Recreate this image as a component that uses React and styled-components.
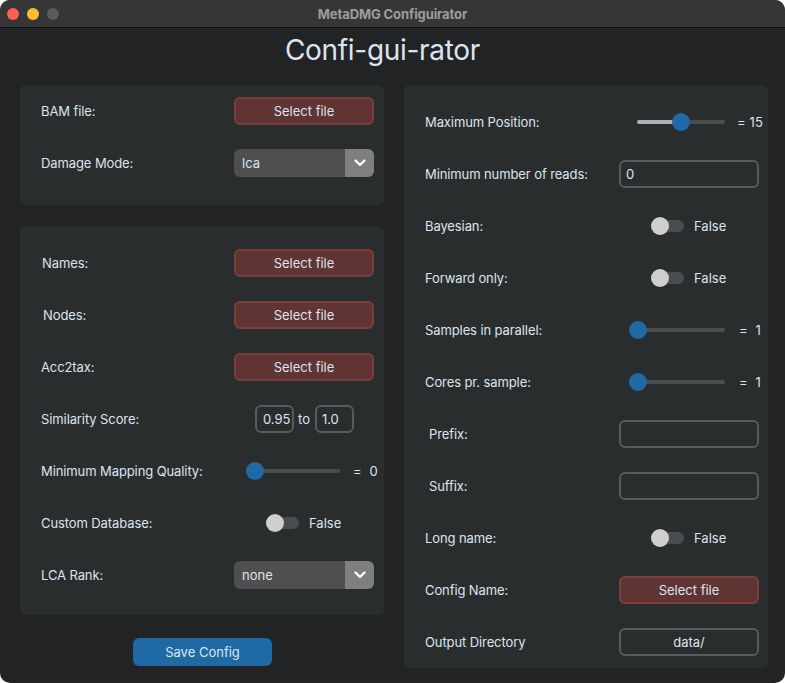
import React from "react";
import styled, { createGlobalStyle } from "styled-components";

const Global = createGlobalStyle`
  html, body { margin: 0; padding: 0; background: #ffffff; }
  * { box-sizing: border-box; }
  body { font-family: Inter, "Noto Sans", sans-serif; }
`;

const Window = styled.div`
  width: 785px;
  height: 683px;
  border-radius: 10px;
  overflow: hidden;
  background: #212325;
  display: flex;
  flex-direction: column;
`;

const TitleBar = styled.div`
  height: 28px;
  flex: none;
  background: #363636;
  border-bottom: 1px solid #0c0c0c;
  display: grid;
  grid-template-columns: 100px 1fr 100px;
  align-items: center;
`;

const Lights = styled.div`
  display: flex;
  gap: 8px;
  padding-left: 7px;
`;

const Light = styled.span`
  width: 12px;
  height: 12px;
  border-radius: 50%;
  background: ${(p) => p.$c};
`;

const WinTitle = styled.div`
  text-align: center;
  color: #9d9d9d;
  font-weight: 700;
  font-size: 13px;
  letter-spacing: -0.1px;
`;

const Heading = styled.h1`
  margin: 0;
  height: 57px;
  display: flex;
  align-items: center;
  justify-content: center;
  font-weight: 400;
  font-size: 28px;
  color: #dce4ee;
  letter-spacing: -0.3px;
  padding: 0 20px 14px 0;
`;

const Columns = styled.div`
  display: grid;
  grid-template-columns: 364px 364px;
  gap: 20px;
  padding: 0 17px 0 20px;
  align-items: start;
`;

const LeftCol = styled.div`
  display: flex;
  flex-direction: column;
`;

const Frame = styled.div`
  background: #2a2d2e;
  border-radius: 6px;
  padding: ${(p) => p.$pad};
  margin-bottom: ${(p) => p.$mb || "0"};
  display: flex;
  flex-direction: column;
`;

const Row = styled.div`
  display: grid;
  grid-template-columns: 1fr 140px;
  align-items: center;
  height: 52px;
  padding: 0 ${(p) => p.$pr || 10}px 0 ${(p) => 21 + (p.$indent || 0)}px;
`;

const Label = styled.span`
  color: #dce4ee;
  font-size: 13px;
  letter-spacing: -0.1px;
`;

const FileButton = styled.button`
  height: 28px;
  width: 140px;
  background: #5f3432;
  border: 2px solid #7b3e3b;
  border-radius: 6px;
  color: #dce4ee;
  font-family: inherit;
  font-size: 13px;
  padding: 0;
`;

const Dropdown = styled.div`
  height: 28px;
  width: 140px;
  border-radius: 6px;
  overflow: hidden;
  display: grid;
  grid-template-columns: 1fr 29px;
`;

const DropValue = styled.div`
  background: #4f4f4f;
  color: #dce4ee;
  font-size: 13px;
  display: flex;
  align-items: center;
  padding-left: 8px;
`;

const DropArrow = styled.div`
  background: #7f7f7f;
  display: flex;
  align-items: center;
  justify-content: center;
`;

const Entry = styled.div`
  height: 28px;
  width: ${(p) => p.$w || 140}px;
  border: 2px solid #565b5e;
  border-radius: 6px;
  color: #dce4ee;
  font-size: 13px;
  display: flex;
  align-items: center;
  justify-content: ${(p) => (p.$center ? "center" : "flex-start")};
  padding-left: ${(p) => (p.$center ? 0 : p.$pl || 5)}px;
`;

const Range = styled.div`
  display: flex;
  align-items: center;
  padding-left: 21px;
`;

const RangeTo = styled.span`
  color: #dce4ee;
  font-size: 13px;
  margin: 0 5px 0 4px;
`;

const SliderWrap = styled.div`
  display: flex;
  align-items: center;
  padding-left: ${(p) => p.$offset}px;
`;

const Track = styled.div`
  position: relative;
  width: ${(p) => p.$w}px;
  height: 4px;
  border-radius: 2px;
  background: #4a4d50;
  flex: none;
`;

const Progress = styled.div`
  position: absolute;
  left: 0;
  top: 0;
  height: 4px;
  border-radius: 2px;
  background: #aab0b5;
`;

const Thumb = styled.div`
  position: absolute;
  top: -7px;
  width: 18px;
  height: 18px;
  margin-left: -9px;
  border-radius: 50%;
  background: #1f6aa5;
`;

const SliderValue = styled.span`
  display: flex;
  gap: ${(p) => p.$gap}px;
  color: #dce4ee;
  font-size: 13px;
  margin-left: ${(p) => p.$ml}px;
`;

const SwitchWrap = styled.div`
  display: flex;
  align-items: center;
  padding-left: 32px;
`;

const SwitchTrack = styled.div`
  position: relative;
  width: 33px;
  height: 12px;
  border-radius: 6px;
  background: #4a4d50;
  flex: none;
`;

const Knob = styled.div`
  position: absolute;
  left: 0;
  top: -3px;
  width: 18px;
  height: 18px;
  border-radius: 50%;
  background: #cfcfcf;
`;

const SwitchText = styled.span`
  margin-left: 10px;
  color: #dce4ee;
  font-size: 13px;
`;

const SaveButton = styled.button`
  align-self: center;
  margin-top: 23px;
  margin-left: 1px;
  width: 139px;
  height: 28px;
  border: none;
  border-radius: 6px;
  background: #1f6aa5;
  color: #dce4ee;
  font-family: inherit;
  font-size: 13px;
`;

const Chevron = () => (
  <svg width="12" height="8" viewBox="0 0 12 8">
    <path d="M1.5 1.5 L6 6 L10.5 1.5" stroke="#ffffff" strokeWidth="2.4" fill="none" strokeLinecap="round" strokeLinejoin="round" />
  </svg>
);

const Select = ({ value }) => (
  <Dropdown>
    <DropValue>{value}</DropValue>
    <DropArrow>
      <Chevron />
    </DropArrow>
  </Dropdown>
);

const Slider = ({ offset, width, frac, value, ml, gap }) => {
  const center = 8 + frac * (width - 16);
  return (
    <SliderWrap $offset={offset}>
      <Track $w={width}>
        {frac > 0 && <Progress style={{ width: center }} />}
        <Thumb style={{ left: center }} />
      </Track>
      <SliderValue $ml={ml} $gap={gap}>
        <span>=</span>
        <span>{value}</span>
      </SliderValue>
    </SliderWrap>
  );
};

const Switch = () => (
  <SwitchWrap>
    <SwitchTrack>
      <Knob />
    </SwitchTrack>
    <SwitchText>False</SwitchText>
  </SwitchWrap>
);

export default function App() {
  return (
    <>
      <Global />
      <Window>
        <TitleBar>
          <Lights>
            <Light $c="#fe5f57" />
            <Light $c="#febc2e" />
            <Light $c="#5a5a5a" />
          </Lights>
          <WinTitle>MetaDMG Configuirator</WinTitle>
          <span />
        </TitleBar>
        <Heading>Confi-gui-rator</Heading>
        <Columns>
          <LeftCol>
            <Frame $pad="0 0 16px 0" $mb="21px">
              <Row>
                <Label>BAM file:</Label>
                <FileButton>Select file</FileButton>
              </Row>
              <Row>
                <Label>Damage Mode:</Label>
                <Select value="lca" />
              </Row>
            </Frame>
            <Frame $pad="11px 0 14px 0">
              <Row $indent={1}>
                <Label>Names:</Label>
                <FileButton>Select file</FileButton>
              </Row>
              <Row $indent={2}>
                <Label>Nodes:</Label>
                <FileButton>Select file</FileButton>
              </Row>
              <Row>
                <Label>Acc2tax:</Label>
                <FileButton>Select file</FileButton>
              </Row>
              <Row>
                <Label>Similarity Score:</Label>
                <Range>
                  <Entry $w={39} $pl={6}>0.95</Entry>
                  <RangeTo>to</RangeTo>
                  <Entry $w={39} $pl={5}>1.0</Entry>
                </Range>
              </Row>
              <Row>
                <Label>Minimum Mapping Quality:</Label>
                <Slider offset={13} width={93} frac={0} value="0" ml={13} gap={8} />
              </Row>
              <Row>
                <Label>Custom Database:</Label>
                <Switch />
              </Row>
              <Row>
                <Label>LCA Rank:</Label>
                <Select value="none" />
              </Row>
            </Frame>
            <SaveButton>Save Config</SaveButton>
          </LeftCol>
          <Frame $pad="11px 0 0 0">
            <Row $pr={9}>
              <Label>Maximum Position:</Label>
              <Slider offset={18} width={88} frac={0.5} value="15" ml={12} gap={4} />
            </Row>
            <Row $pr={9}>
              <Label>Minimum number of reads:</Label>
              <Entry $pl={5}>0</Entry>
            </Row>
            <Row $pr={9}>
              <Label>Bayesian:</Label>
              <Switch />
            </Row>
            <Row $pr={9}>
              <Label>Forward only:</Label>
              <Switch />
            </Row>
            <Row $pr={9}>
              <Label>Samples in parallel:</Label>
              <Slider offset={11} width={95} frac={0} value="1" ml={14} gap={8} />
            </Row>
            <Row $pr={9}>
              <Label>Cores pr. sample:</Label>
              <Slider offset={11} width={95} frac={0} value="1" ml={14} gap={8} />
            </Row>
            <Row $pr={9} $indent={4}>
              <Label>Prefix:</Label>
              <Entry />
            </Row>
            <Row $pr={9} $indent={4}>
              <Label>Suffix:</Label>
              <Entry />
            </Row>
            <Row $pr={9}>
              <Label>Long name:</Label>
              <Switch />
            </Row>
            <Row $pr={9}>
              <Label>Config Name:</Label>
              <FileButton>Select file</FileButton>
            </Row>
            <Row $pr={9}>
              <Label>Output Directory</Label>
              <Entry $center>data/</Entry>
            </Row>
          </Frame>
        </Columns>
      </Window>
    </>
  );
}
